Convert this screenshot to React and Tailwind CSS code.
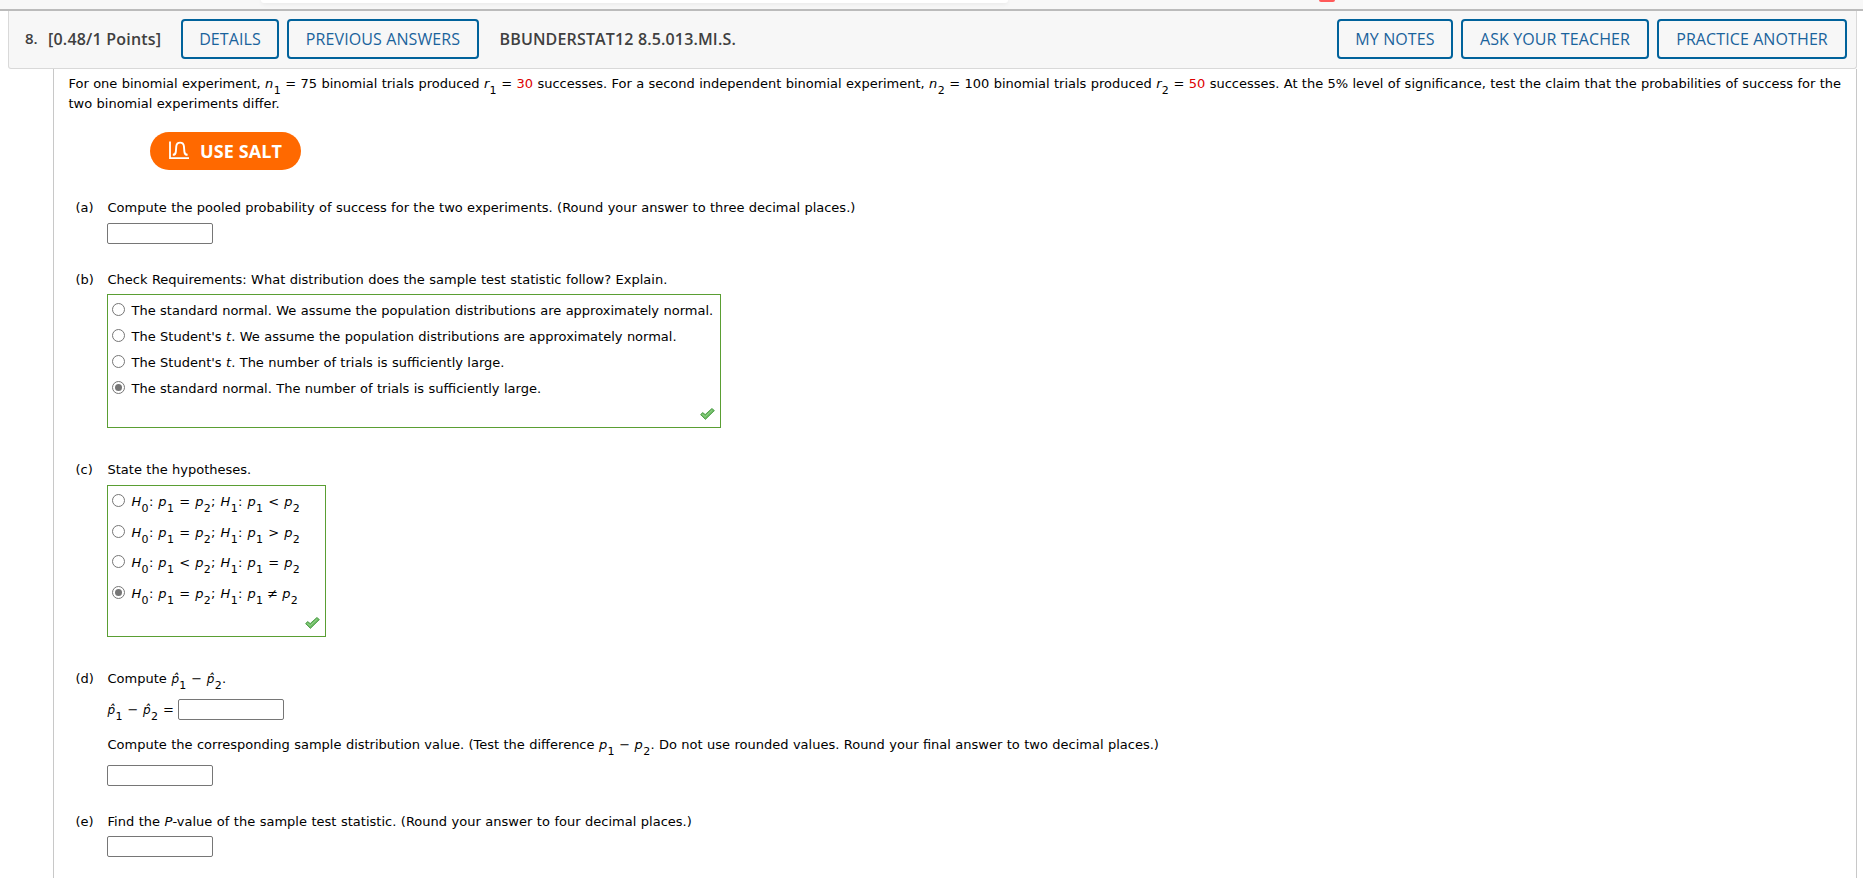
import { useState } from "react";

function Sub({ children }) {
  return (
    <span className="px-[0.32px] text-[11px] leading-[0] align-[-6px]">{children}</span>
  );
}

// italic variable with an optional subscript
function Var({ name, sub }) {
  return (
    <>
      <i>{name}</i>
      {sub && <Sub>{sub}</Sub>}
    </>
  );
}

function PHat({ sub }) {
  return (
    <>
      <i className="text-[12px] leading-none">p̂</i>
      <Sub>{sub}</Sub>
    </>
  );
}

function HeaderButton({ className, children }) {
  return (
    <button
      type="button"
      className={`h-10 shrink-0 rounded border-2 border-[#00629b] bg-transparent text-[16px] leading-none tracking-[0.1px] whitespace-nowrap text-[#1a639c] ${className}`}
    >
      {children}
    </button>
  );
}

function AnswerInput() {
  return (
    <input
      type="text"
      className="block h-[21px] w-[106px] shrink-0 rounded-[2px] border border-[#767676] bg-white px-1 text-[13px]"
    />
  );
}

function Radio({ checked, onClick }) {
  return (
    <button
      type="button"
      role="radio"
      aria-checked={checked}
      onClick={onClick}
      className="flex size-[13px] shrink-0 items-center justify-center rounded-full border border-[#767676] bg-white"
    >
      {checked && <span className="size-[7px] rounded-full bg-[#767676]" />}
    </button>
  );
}

function Check() {
  return (
    <svg width="15" height="12" viewBox="0 0 15 12">
      <path
        d="M0.6 6.6 L2.7 4.6 L5.2 6.6 L11.9 0.5 L14.4 2.6 L5.4 11.4 Z"
        fill="#6dbb63"
        stroke="#4b9a46"
        strokeWidth="0.9"
        strokeLinejoin="round"
      />
      <path d="M2.3 6.4 L5.3 8.6 L12.2 2.2" fill="none" stroke="#94d38b" strokeWidth="1" />
    </svg>
  );
}

function SaltIcon() {
  return (
    <svg width="20" height="19" viewBox="0 0 20 19" fill="none" stroke="white" className="-mt-[2px]">
      <path d="M1 0.5 V17.2 H20" strokeWidth="1.8" />
      <path
        d="M3.8 13.8 C5.6 13.8 6.6 13 6.8 10.8 L7.3 5.2 C7.6 2.6 8.6 1.6 11.1 1.6 C13.6 1.6 14.6 2.6 14.9 5.2 L15.4 10.8 C15.6 13 16.6 13.8 18.6 13.8"
        strokeWidth="1.9"
      />
    </svg>
  );
}

const distributions = [
  <>The standard normal. We assume the population distributions are approximately normal.</>,
  <>The Student's <i>t</i>. We assume the population distributions are approximately normal.</>,
  <>The Student's <i>t</i>. The number of trials is sufficiently large.</>,
  <>The standard normal. The number of trials is sufficiently large.</>,
];

const hypotheses = [
  ["=", "<"],
  ["=", ">"],
  ["<", "="],
  ["=", "≠"],
];

export default function App() {
  const [distribution, setDistribution] = useState(3);
  const [hypothesis, setHypothesis] = useState(3);

  return (
    <div className="flex h-[878px] w-[1863px] flex-col overflow-hidden bg-white font-['DejaVu_Sans',sans-serif] text-[13px] leading-5 text-black">
      {/* Bottom edge of the site toolbar */}
      <div className="flex h-[11px] shrink-0 items-start border-b-2 border-[#bbbbbb] bg-[#f7f7f7] pl-[261px]">
        <div className="h-[3px] w-[747px] rounded-b bg-white shadow-[0_1px_4px_rgba(0,0,0,0.08)]" />
        <div className="ml-[311px] h-[2px] w-4 rounded-b bg-[#ff5a5a]" />
      </div>

      {/* Question header */}
      <div className="ml-2 flex h-[58px] w-[1849px] shrink-0 items-start rounded-b-[3px] border border-t-0 border-[#d9d9d9] bg-[#f7f7f7] pt-2 pr-[9px] pl-4 font-['Open_Sans',sans-serif]">
        <div className="flex h-10 w-[156px] shrink-0 items-center text-[16px] font-semibold whitespace-nowrap text-[#404040]">
          <span className="w-[23px] pb-[2px] text-[15px]">8.</span>
          <span className="tracking-[0.2px]">[0.48/1 Points]</span>
        </div>
        <HeaderButton className="w-[98px]">DETAILS</HeaderButton>
        <HeaderButton className="ml-2 w-[192px]">PREVIOUS ANSWERS</HeaderButton>
        <div className="ml-[20.5px] flex h-10 items-center text-[16px] font-semibold tracking-[0.15px] text-[#404040]">
          BBUNDERSTAT12 8.5.013.MI.S.
        </div>
        <div className="ml-auto flex gap-2">
          <HeaderButton className="w-[116px]">MY NOTES</HeaderButton>
          <HeaderButton className="w-[188px]">ASK YOUR TEACHER</HeaderButton>
          <HeaderButton className="w-[190px]">PRACTICE ANOTHER</HeaderButton>
        </div>
      </div>

      {/* Question body */}
      <div className="ml-[53px] w-[1804px] grow border-x border-[#c8c8c8] pt-[5px] pl-[14.5px] whitespace-nowrap [word-spacing:0.28px]">
        <p className="h-[58px] [word-spacing:0.21px]">
          For one binomial experiment, <Var name="n" sub="1" /> = 75 binomial trials produced{" "}
          <Var name="r" sub="1" /> = <span className="text-[#dd0000]">30</span> successes. For a second
          independent binomial experiment, <Var name="n" sub="2" /> = 100 binomial trials produced{" "}
          <Var name="r" sub="2" /> = <span className="text-[#dd0000]">50</span> successes. At the 5% level of
          significance, test the claim that the probabilities of success for the
          <br />
          two binomial experiments differ.
        </p>

        <button
          type="button"
          className="ml-[81.5px] flex h-[38px] w-[151px] items-center rounded-full bg-[#ff6900] pl-[19px] font-['Open_Sans',sans-serif] text-[18px] font-bold text-white"
        >
          <SaltIcon />
          <span className="ml-[11px] tracking-[0.1px]">USE SALT</span>
        </button>

        {/* (a) */}
        <div className="mt-[28px] flex h-[72px] pl-[6.5px]">
          <span className="w-8 shrink-0 pl-[0.5px]">(a)</span>
          <div>
            <p className="h-[25px] pl-[0.5px] [word-spacing:0.24px]">
              Compute the pooled probability of success for the two experiments. (Round your answer to three
              decimal places.)
            </p>
            <AnswerInput />
          </div>
        </div>

        {/* (b) */}
        <div className="flex h-[190px] pl-[6.5px]">
          <span className="w-8 shrink-0 pl-[0.5px]">(b)</span>
          <div>
            <p className="h-6 pl-[0.5px]">
              Check Requirements: What distribution does the sample test statistic follow? Explain.
            </p>
            <div className="flex h-[134px] w-[614px] flex-col border border-[#5a9e33] pt-[3px] pr-[5px] pl-1">
              {distributions.map((text, i) => (
                <label key={i} className="flex h-[26px] items-start pt-[5px]">
                  <Radio checked={distribution === i} onClick={() => setDistribution(i)} />
                  <span className="-mt-[2px] ml-[6.5px]">{text}</span>
                </label>
              ))}
              <div className="mt-[6px] self-end">
                <Check />
              </div>
            </div>
          </div>
        </div>

        {/* (c) */}
        <div className="flex h-[209px] pl-[6.5px]">
          <span className="w-8 shrink-0 pl-[0.5px]">(c)</span>
          <div>
            <p className="h-[25px] pl-[0.5px]">State the hypotheses.</p>
            <div className="flex h-[152px] w-[219px] flex-col border border-[#5a9e33] pt-[3px] pr-[5px] pl-1">
              {hypotheses.map(([first, second], i) => (
                <label key={i} className="flex h-[30.6px] items-start pt-[5px]">
                  <Radio checked={hypothesis === i} onClick={() => setHypothesis(i)} />
                  <span className="-mt-[2px] ml-[6.5px] [word-spacing:0.9px]">
                    <Var name="H" sub="0" />: <Var name="p" sub="1" /> {first} <Var name="p" sub="2" />;{" "}
                    <Var name="H" sub="1" />: <Var name="p" sub="1" />{" "}
                    {second === "≠" ? <span className="mr-[-1px] ml-[-1px]">≠</span> : second}{" "}
                    <Var name="p" sub="2" />
                  </span>
                </label>
              ))}
              <div className="mt-[6px] self-end">
                <Check />
              </div>
            </div>
          </div>
        </div>

        {/* (d) */}
        <div className="flex h-[143px] pl-[6.5px]">
          <span className="w-8 shrink-0 pl-[0.5px]">(d)</span>
          <div>
            <p className="h-[30px] pl-[0.5px] [word-spacing:0.5px]">
              Compute <PHat sub="1" /> − <PHat sub="2" />.
            </p>
            <div className="flex h-[36px] items-start">
              <span className="w-[71px] pt-px pl-[0.5px] [word-spacing:0.6px]">
                <PHat sub="1" /> − <PHat sub="2" /> =
              </span>
              <AnswerInput />
            </div>
            <p className="h-[30px] pl-[0.5px]">
              Compute the corresponding sample distribution value. (Test the difference{" "}
              <Var name="p" sub="1" /> − <Var name="p" sub="2" />. Do not use rounded values. Round your
              final answer to two decimal places.)
            </p>
            <AnswerInput />
          </div>
        </div>

        {/* (e) */}
        <div className="flex pl-[6.5px]">
          <span className="w-8 shrink-0 pl-[0.5px]">(e)</span>
          <div>
            <p className="h-6 pl-[0.5px] [word-spacing:0.4px]">
              Find the <i>P</i>-value of the sample test statistic. (Round your answer to four decimal places.)
            </p>
            <AnswerInput />
          </div>
        </div>
      </div>
    </div>
  );
}
